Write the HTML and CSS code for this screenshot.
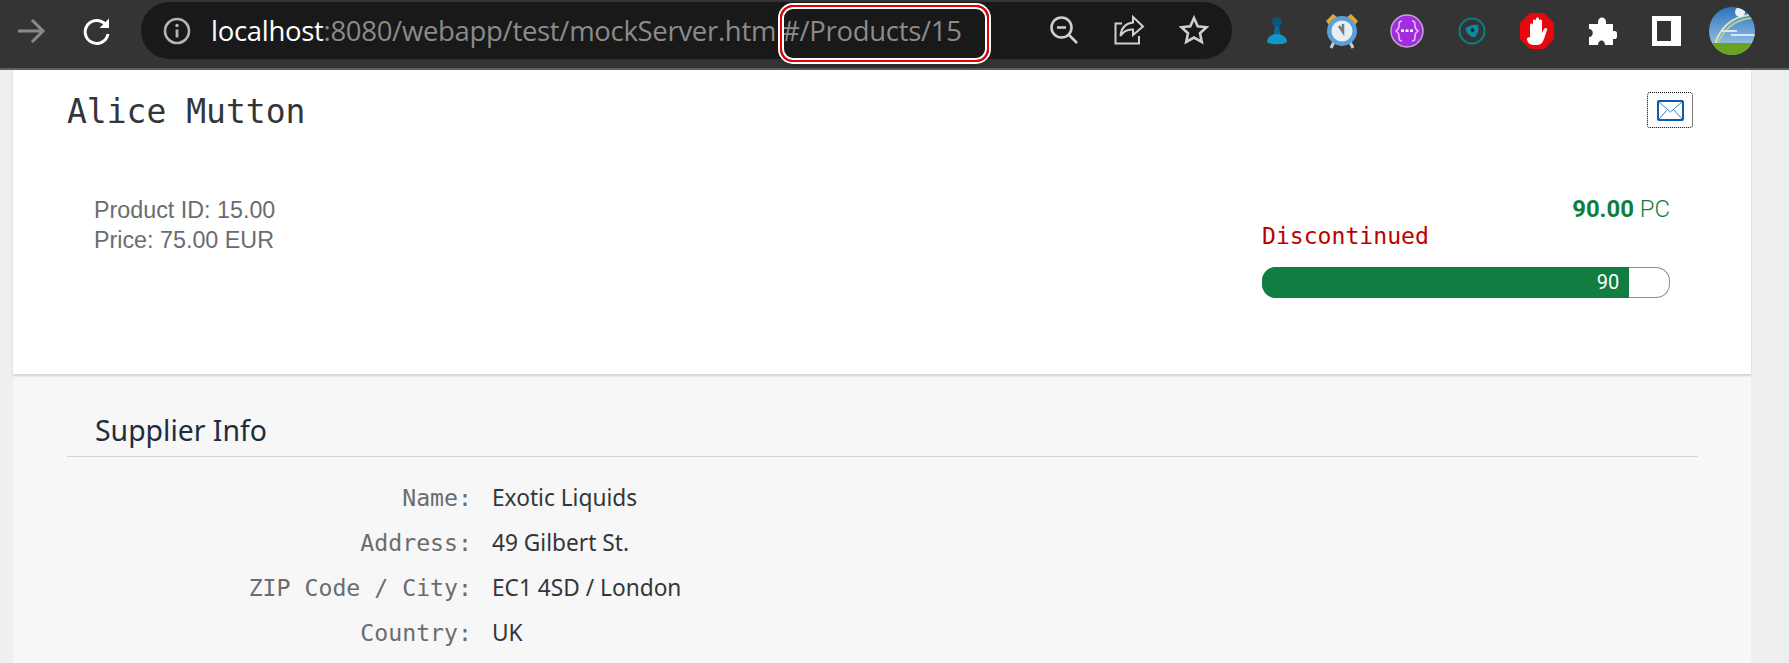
FILE: index.html
```html
<!DOCTYPE html>
<html lang="en">
<head>
    <meta charset="UTF-8">
    <title>Alice Mutton</title>
    <link rel="stylesheet" href="styles.css">
</head>
<body>
    <div class="toolbar">
        <div class="nav-btn back">
            <svg width="30" height="26" viewBox="0 0 30 26" fill="none" stroke="#8a8a8a" stroke-width="3"><path d="M2 13H27M16 2l11 11-11 11"/></svg>
        </div>
        <div class="nav-btn reload">
            <svg width="30" height="30" viewBox="0 0 30 30" fill="none"><path d="M23.5 8.5A11.5 11.5 0 1 0 26 18" stroke="#fff" stroke-width="3"/><path d="M27 2.5V12H17.5z" fill="#fff"/></svg>
        </div>
        <div class="omnibox">
            <svg class="info-icon" width="28" height="28" viewBox="0 0 28 28" fill="none"><circle cx="14" cy="14" r="12" stroke="#b4b4b4" stroke-width="2.6"/><path d="M14 12.5v8" stroke="#b4b4b4" stroke-width="2.8"/><circle cx="14" cy="8.5" r="1.7" fill="#b4b4b4"/></svg>
            <div class="url"><span class="host">localhost</span>:8080/webapp/test/mockServer.htm<span class="hash">#/Products/15</span></div>
            <div class="highlight"></div>
            <div class="omni-actions">
                <svg width="30" height="30" viewBox="0 0 30 30" fill="none" stroke="#cfcfcf" stroke-width="2.6"><circle cx="12.5" cy="12.5" r="10"/><path d="M8 12.5h9M19.5 19.5l8.5 8.5"/></svg>
                <svg width="32" height="32" viewBox="0 0 32 32" fill="none" stroke="#cfcfcf" stroke-width="2"><path d="M9 9.5H2.5V29.5H26V22"/><path d="M20 3l10 9.5L20 21v-5.5C14 15 10 18 7.5 22 8 15 12 9.5 20 8.5z"/></svg>
                <svg width="30" height="30" viewBox="0 0 30 30" fill="none" stroke="#cfcfcf" stroke-width="2.6"><path d="M15 3l3.7 8.2 8.8 1-6.5 6 1.8 8.8L15 22.500l-7.800 4.500 1.800-8.800-6.500-6 8.800-1z"/></svg>
            </div>
        </div>
        <div class="extensions">
            <div class="ext">
                <svg width="22" height="32" viewBox="0 0 22 32"><circle cx="11" cy="7" r="5" fill="#0c5578"/><path d="M9 11h4l1.500 9h-7z" fill="#0b6a92"/><path d="M1 27c0-5 5-8 10-8s10 3 10 8c-3 3-17 3-20 0z" fill="#1397c9"/></svg>
            </div>
            <div class="ext">
                <svg width="34" height="36" viewBox="0 0 34 36"><path d="M1 8l7-7 4 3-8 8zM33 8l-7-7-4 3 8 8z" fill="#e0a92e"/><path d="M9 29l-3 6M25 29l3 6" stroke="#ccc" stroke-width="3"/><circle cx="17" cy="18" r="15" fill="#5c9fd8"/><circle cx="17" cy="18" r="10.500" fill="#e6eef6"/><path d="M18 11v8l-4-6" stroke="#777" stroke-width="2.500" fill="none"/></svg>
            </div>
            <div class="ext">
                <svg width="34" height="34" viewBox="0 0 34 34"><circle cx="17" cy="17" r="16" fill="#a32ce0" stroke="#bfa9cc" stroke-width="1.500"/><path d="M12 7c-3 0-3 2-3 5s-3 5-3 5 3 2 3 5 0 5 3 5M22 7c3 0 3 2 3 5s3 5 3 5-3 2-3 5 0 5-3 5" fill="none" stroke="#e7c4f7" stroke-width="1.500"/><path d="M11 15.500h3v2.500h-3zM15.500 15.500h3v2.500h-3zM20 15.500h3v2.500h-3z" fill="#fff"/></svg>
            </div>
            <div class="ext">
                <svg width="28" height="28" viewBox="0 0 28 28"><circle cx="14" cy="14" r="12.500" fill="none" stroke="#0a7f8c" stroke-width="2"/><path d="M7.500 12c2-3 9-5 12.500-4 1.500 4 0 10-4 12.500-4-1-8-4-8.500-8.500z" fill="#0a8c9c"/><circle cx="14.500" cy="13" r="2" fill="#0b2b50"/></svg>
            </div>
            <div class="ext">
                <svg width="34" height="36" viewBox="0 0 34 36"><path d="M10 0h14l10 10v16L24 36H10L0 26V10z" fill="#e8070d"/><path d="M10 24V12c0-2 3-2 3 0v5-9c0-2 3-2 3 0v8-10c0-2 3-2 3 0v10-8c0-2 3-2 3 0v12l2-4c1-2 4-1 3 1l-3 9c-1 3-3 6-7 6h-3c-4 0-7-2-7-7z" fill="#fff"/></svg>
            </div>
            <div class="ext">
                <svg width="30" height="30" viewBox="0 0 30 30"><path d="M11 6c0-6 8-6 8 0v2h7v7h2c3 0 3 8 0 8h-2v6h-8c0-6-7-6-7 0H2v-8c5 0 5-8 0-8V8h9z" fill="#fff"/></svg>
            </div>
            <div class="ext">
                <div class="panel-icon"></div>
            </div>
            <div class="ext">
                <svg width="46" height="48" viewBox="0 0 46 48">
                    <defs>
                        <linearGradient id="sky" x1="0" y1="0" x2="0" y2="1">
                            <stop offset="0" stop-color="#2b74bd"/>
                            <stop offset="0.75" stop-color="#8fbbe0"/>
                        </linearGradient>
                        <clipPath id="round"><ellipse cx="23" cy="24" rx="23" ry="24"/></clipPath>
                    </defs>
                    <g clip-path="url(#round)">
                        <rect width="46" height="48" fill="url(#sky)"/>
                        <path d="M6 38C10 22 22 10 40 8" fill="none" stroke="#e8dfb0" stroke-width="2"/>
                        <path d="M9 38C13 24 24 13 42 11" fill="none" stroke="#a6d0a8" stroke-width="2"/>
                        <path d="M22 28h24M12 24h16" stroke="#d6e6f3" stroke-width="2"/>
                        <circle cx="31" cy="5" r="5" fill="#e6f0f8"/>
                        <rect y="36" width="46" height="12" fill="#6aa31f"/>
                    </g>
                </svg>
            </div>
        </div>
    </div>

    <div class="page">
        <div class="header-card">
            <div class="title-row">
                <h1>Alice Mutton</h1>
                <div class="mail-btn">
                    <svg width="27" height="21" viewBox="0 0 27 21" fill="none"><rect x="1" y="1" width="25" height="19" rx="1" stroke="#0a5cad" stroke-width="2"/><path d="M2 2l11.500 10L25 2M2 19l8-9M25 19l-8-9" stroke="#3c7fc0" stroke-width="1"/></svg>
                </div>
            </div>
            <div class="attributes">
                <div class="attr-left">
                    <div>Product ID: 15.00</div>
                    <div>Price: 75.00 EUR</div>
                </div>
                <div class="attr-right">
                    <div class="stock"><b>90.00</b> PC</div>
                    <div class="status">Discontinued</div>
                    <div class="progress">
                        <div class="progress-fill" style="width: 90%">90</div>
                    </div>
                </div>
            </div>
        </div>
        <div class="supplier">
            <h2>Supplier Info</h2>
            <div class="form">
                <div class="form-row"><div class="label">Name:</div><div class="value">Exotic Liquids</div></div>
                <div class="form-row"><div class="label">Address:</div><div class="value">49 Gilbert St.</div></div>
                <div class="form-row"><div class="label">ZIP Code / City:</div><div class="value">EC1 4SD / London</div></div>
                <div class="form-row"><div class="label">Country:</div><div class="value">UK</div></div>
            </div>
        </div>
    </div>
</body>
</html>
```

FILE: styles.css
```css
html, body {
    margin: 0;
    height: 100%;
    overflow: hidden;
}
body {
    background-color: #edeff1;
    font-family: "Liberation Sans", Arial, sans-serif;
}

/* browser bar */
.toolbar {
    display: flex;
    align-items: flex-start;
    height: 68px;
    background-color: #343434;
    border-bottom: 2px solid #5f5f5f;
}
.nav-btn {
    display: flex;
    justify-content: center;
    align-items: center;
    height: 62px;
}
.back {
    width: 62px;
}
.reload {
    width: 70px;
}
.omnibox {
    position: relative;
    display: flex;
    align-items: center;
    width: 1091px;
    height: 57px;
    margin: 2px 0 0 9px;
    background-color: #191919;
    border-radius: 29px;
}
.info-icon {
    margin-left: 22px;
}
.url {
    margin-left: 20px;
    font-family: "Open Sans", sans-serif;
    font-size: 27.500px;
    letter-spacing: -0.300px;
    color: #8b8b8b;
    white-space: nowrap;
}
.host {
    color: #fff;
}
.hash {
    margin-left: 6px;
}
.highlight {
    position: absolute;
    left: 639px;
    top: 3px;
    width: 205px;
    height: 53px;
    border: 2px solid #e60000;
    border-radius: 13px;
    box-shadow: 0 0 0 2px #fff, inset 0 0 0 2px #fff, 0 4px 8px rgba(0, 0, 0, 0.2);
}
.omni-actions {
    position: absolute;
    right: 23px;
    top: 12px;
    display: flex;
    align-items: center;
    gap: 34px;
}
.extensions {
    display: flex;
    margin-left: 12px;
}
.ext {
    display: flex;
    justify-content: center;
    align-items: center;
    width: 65px;
    height: 62px;
}
.panel-icon {
    box-sizing: border-box;
    width: 29px;
    height: 30px;
    background-color: #343434;
    border: 5px solid #fff;
    border-right-width: 10px;
}

/* page */
.page {
    margin: 0 38px 0 13px;
}
.header-card {
    height: 304px;
    background-color: #fff;
    box-shadow: 0 2px 2px rgba(0, 0, 0, 0.15);
    position: relative;
}
.title-row {
    display: flex;
    justify-content: space-between;
    padding: 22px 58px 0 54px;
}
h1 {
    margin: 0;
    font-family: "DejaVu Sans Mono", monospace;
    font-size: 33px;
    line-height: 39px;
    font-weight: 400;
    color: #32363a;
}
.mail-btn {
    box-sizing: border-box;
    display: flex;
    justify-content: center;
    align-items: center;
    width: 46px;
    height: 36px;
    border: 1px dotted #000;
    border-radius: 3px;
}
.attributes {
    display: flex;
    justify-content: space-between;
    padding: 57px 81px 0 81px;
}
.attr-left {
    margin-top: 7px;
    font-size: 23.300px;
    line-height: 30px;
    color: #6a6d70;
}
.attr-right {
    width: 408px;
}
.stock {
    text-align: right;
    font-family: Roboto, sans-serif;
    font-size: 23.900px;
    font-weight: 300;
    line-height: 28px;
    color: #107e3e;
    margin-top: 7px;
}
.stock b {
    font-weight: 700;
}
.status {
    font-family: "DejaVu Sans Mono", monospace;
    font-size: 23.100px;
    line-height: 30px;
    margin-top: -2px;
    color: #bb0000;
}
.progress {
    height: 31px;
    margin-top: 16px;
    box-shadow: inset 0 0 0 1px #89919a;
    border-radius: 14px;
    overflow: hidden;
}
.progress-fill {
    box-sizing: border-box;
    height: 31px;
    padding-right: 10px;
    background-color: #127d40;
    color: #fff;
    font-family: Roboto, sans-serif;
    font-size: 20px;
    line-height: 31px;
    text-align: right;
}
.supplier {
    height: 300px;
    background-color: #f7f7f7;
    padding: 0 53px 0 54px;
}
h2 {
    margin: 0;
    padding: 37px 0 0 28px;
    height: 45px;
    border-bottom: 1px solid #d5d6d7;
    font-family: "Noto Sans", sans-serif;
    font-size: 28.400px;
    line-height: 38px;
    font-weight: 400;
    color: #1d2d3e;
}
.form {
    padding-top: 18px;
}
.form-row {
    display: flex;
    height: 45px;
    align-items: center;
}
.label {
    width: 405px;
    text-align: right;
    font-family: "DejaVu Sans Mono", monospace;
    font-size: 23.200px;
    color: #6a6d70;
}
.value {
    margin-left: 20px;
    margin-top: -1px;
    font-family: "Noto Sans", sans-serif;
    font-size: 22.700px;
    color: #32363a;
}
```
